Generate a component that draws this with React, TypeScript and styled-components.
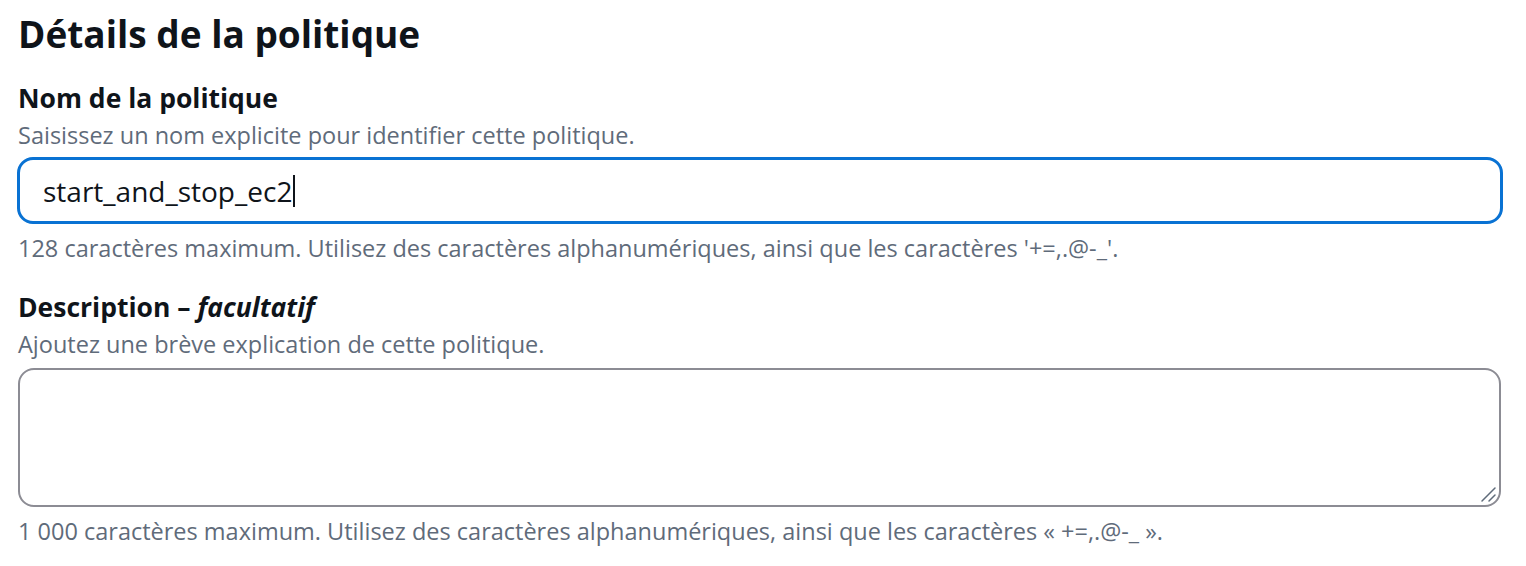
import React from 'react'
import styled, { createGlobalStyle } from 'styled-components'

const GlobalStyle = createGlobalStyle`
	html, body {
		margin: 0;
		padding: 0;
		background: #ffffff;
	}
	body {
		font-family: 'Open Sans', 'Noto Sans', sans-serif;
		color: #0f141a;
	}
`

const Page = styled.div`
	display: flex;
	flex-direction: column;
	padding: 10px 24px 0 18px;
`

const Title = styled.h2`
	margin: 0;
	font-size: 37px;
	line-height: 48px;
	font-weight: 700;
	color: #0f141a;
`

const Field = styled.div<{ $top: number }>`
	display: flex;
	flex-direction: column;
	margin-top: ${(p) => p.$top}px;
`

const Label = styled.label`
	font-size: 26.5px;
	line-height: 36px;
	font-weight: 700;
	color: #0f141a;

	em {
		font-style: italic;
	}
`

const Hint = styled.div`
	font-size: 23.5px;
	line-height: 32px;
	color: #5f6b7a;
`

const Description = styled(Hint)`
	margin-top: 3px;
`

const Constraint = styled(Hint)`
	margin-top: 8px;
`

const InputBox = styled.div`
	margin: 6px -1px 0;
	height: 67px;
	box-sizing: border-box;
	border: 3px solid #0972d3;
	border-radius: 16px;
	display: flex;
	align-items: center;
	padding-left: 23px;
	font-size: 28px;
	color: #0f141a;
`

const Caret = styled.span`
	display: inline-block;
	width: 2px;
	height: 32px;
	background: #0f141a;
	margin-left: 1px;
`

const TextArea = styled.div`
	position: relative;
	margin: 8px 1px 0 0;
	height: 139px;
	box-sizing: border-box;
	border: 2px solid #8c8c94;
	border-radius: 16px;
`

const Grip = styled.svg`
	position: absolute;
	right: 2px;
	bottom: 2px;
`

export default function App() {
	return (
		<>
			<GlobalStyle />
			<Page>
				<Title>Détails de la politique</Title>
				<Field $top={22}>
					<Label>Nom de la politique</Label>
					<Description>Saisissez un nom explicite pour identifier cette politique.</Description>
					<InputBox>
						start_and_stop_ec2
						<Caret />
					</InputBox>
					<Constraint>
						128 caractères maximum. Utilisez des caractères alphanumériques, ainsi que les caractères '+=,.@-_'.
					</Constraint>
				</Field>
				<Field $top={25}>
					<Label>
						Description – <em>facultatif</em>
					</Label>
					<Description>Ajoutez une brève explication de cette politique.</Description>
					<TextArea>
						<Grip width="18" height="18" viewBox="0 0 18 18">
							<path d="M16 3 L3 16 M16 10 L10 16" stroke="#5f6b7a" strokeWidth="1.5" strokeLinecap="round" fill="none" />
						</Grip>
					</TextArea>
					<Constraint>
						1 000 caractères maximum. Utilisez des caractères alphanumériques, ainsi que les caractères « +=,.@-_ ».
					</Constraint>
				</Field>
			</Page>
		</>
	)
}
